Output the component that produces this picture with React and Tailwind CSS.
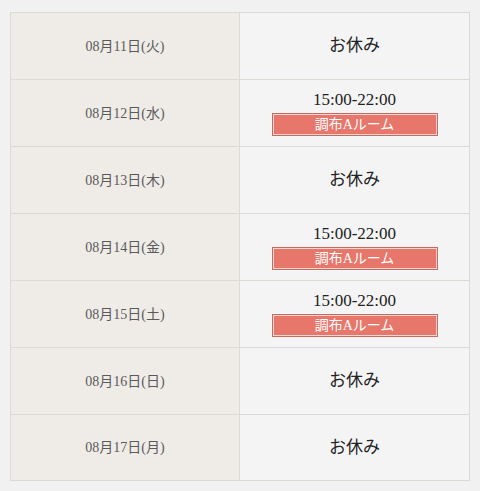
const rows = [
  { date: '08月11日(火)', open: false },
  { date: '08月12日(水)', open: true },
  { date: '08月13日(木)', open: false },
  { date: '08月14日(金)', open: true },
  { date: '08月15日(土)', open: true },
  { date: '08月16日(日)', open: false },
  { date: '08月17日(月)', open: false },
]

const serif = { fontFamily: '"Liberation Serif", "Noto Sans CJK JP", serif' }

export default function App() {
  return (
    <div className="w-[480px] h-[491px] bg-[#f1f1f1] pt-[12px] px-[10px]" style={serif}>
      <div className="border border-[#dcdad5]">
        {rows.map((row, i) => (
          <div
            key={row.date}
            className={`grid grid-cols-2 ${i < rows.length - 1 ? 'h-[67px] border-b border-[#dcdad5]' : 'h-[65px]'}`}
          >
            <div className="bg-[#efece8] border-r border-[#dcdad5] flex items-center justify-center text-[14px] text-[#5a5a5a]">
              {row.date}
            </div>
            <div className="bg-[#f4f4f4] flex flex-col items-center justify-center text-[#222]">
              {row.open ? (
                <>
                  <span className="text-[17px] leading-[20px]">15:00-22:00</span>
                  <div className="mt-[3px] w-[166px] h-[23px] bg-[#e7766b] border border-[#c86a60] shadow-[inset_0_0_0_1px_#f6d6d2] flex items-center justify-center text-white text-[14px]">
                    調布Aルーム
                  </div>
                </>
              ) : (
                <span className="text-[17px]">お休み</span>
              )}
            </div>
          </div>
        ))}
      </div>
    </div>
  )
}
